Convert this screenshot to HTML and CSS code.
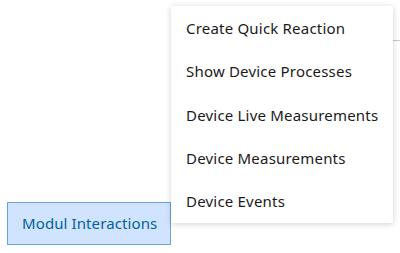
FILE: index.html
```html
<!DOCTYPE html>
<html>
<head>
<meta charset="utf-8">
<link rel="stylesheet" href="styles.css">
</head>
<body>
<div class="stage">
  <div class="topbar"><div class="tab-rule"></div></div>
  <div class="actions">
    <button class="trigger">Modul Interactions</button>
  </div>
  <ul class="menu">
    <li class="item">Create Quick Reaction</li>
    <li class="item">Show Device Processes</li>
    <li class="item">Device Live Measurements</li>
    <li class="item">Device Measurements</li>
    <li class="item">Device Events</li>
  </ul>
</div>
</body>
</html>
```
FILE: styles.css
```css
html, body {
  margin: 0;
  padding: 0;
  background: #fff;
}
.stage {
  position: relative;
  width: 400px;
  height: 253px;
  overflow: hidden;
  font-family: "Noto Sans", "Liberation Sans", sans-serif;
}
.topbar {
  display: flex;
  justify-content: flex-end;
  height: 41px;
}
.tab-rule {
  width: 40px;
  height: 40px;
  border-bottom: 1px solid #c8c8c8;
}
.actions {
  display: flex;
  padding: 161px 0 0 7px;
}
.trigger {
  width: 164px;
  height: 43px;
  box-sizing: border-box;
  margin: 0;
  padding: 0 0 0 14px;
  background: #d1e4ff;
  border: 1px solid #6aa3d8;
  color: #00629a;
  font-family: inherit;
  font-size: 15px;
  letter-spacing: 0.1px;
  text-align: left;
  line-height: 41px;
}
.menu {
  position: absolute;
  left: 171px;
  top: 6px;
  width: 222px;
  margin: 0;
  padding: 1px 0 0;
  list-style: none;
  background: #fff;
  box-shadow: 0 1px 6px rgba(0, 0, 0, 0.18);
}
.item {
  padding: 0 15px;
  height: 43.25px;
  line-height: 43.25px;
  font-size: 15px;
  letter-spacing: 0.2px;
  color: #1a1a1a;
  white-space: nowrap;
}
```
